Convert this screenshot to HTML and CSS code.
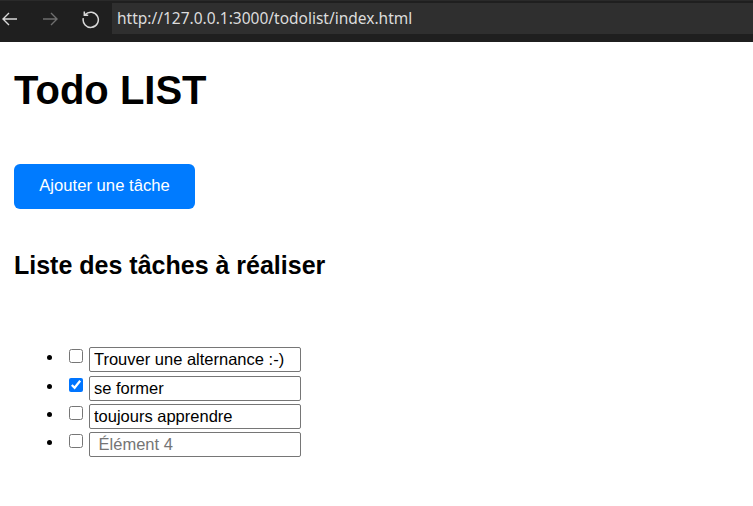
FILE: index.html
```html
<!DOCTYPE html>
<html lang="fr">
<head>
<meta charset="utf-8">
<title>Todo LIST</title>
<link rel="stylesheet" href="styles.css">
</head>
<body>
<header class="chrome">
  <div class="nav">
    <svg class="nav-icon" width="20" height="20" viewBox="0 0 20 20"><path d="M17 10H3M9 4L3 10L9 16" fill="none" stroke="#d8d8d8" stroke-width="1.4"/></svg>
    <svg class="nav-icon" width="20" height="20" viewBox="0 0 20 20"><path d="M3 10H17M11 4L17 10L11 16" fill="none" stroke="#6e6e6e" stroke-width="1.4"/></svg>
    <svg class="nav-icon" width="20" height="20" viewBox="0 0 20 20"><path d="M5.2 5.6A7.6 7.6 0 1 1 3.3 9.2M4.3 2.4V6.2H8.2" fill="none" stroke="#d8d8d8" stroke-width="1.5"/></svg>
  </div>
  <div class="url">http://127.0.0.1:3000/todolist/index.html</div>
</header>
<main class="page">
  <h1 class="title">Todo LIST</h1>
  <button class="add-btn" type="button">Ajouter une tâche</button>
  <h2 class="subtitle">Liste des tâches à réaliser</h2>
  <ul class="tasks">
    <li class="task"><div class="task-row"><input class="check" type="checkbox"><input class="field" type="text" value="Trouver une alternance :-)"></div></li>
    <li class="task"><div class="task-row"><input class="check" type="checkbox" checked><input class="field" type="text" value="se former"></div></li>
    <li class="task"><div class="task-row"><input class="check" type="checkbox"><input class="field" type="text" value="toujours apprendre"></div></li>
    <li class="task"><div class="task-row"><input class="check" type="checkbox"><input class="field" type="text" placeholder=" Élément 4"></div></li>
  </ul>
</main>
</body>
</html>
```

FILE: styles.css
```css
html, body {
  margin: 0;
  padding: 0;
  background: #ffffff;
}

body {
  font-family: "Liberation Sans", Arial, sans-serif;
  color: #000;
}

.chrome {
  height: 42px;
  background: #1f1f1f;
  display: flex;
  align-items: flex-start;
  box-sizing: border-box;
  padding-top: 2px;
  border-top: 1px solid #2a2a2a;
}

.nav {
  display: flex;
  gap: 20px;
  width: 112px;
  padding-left: 0;
  padding-top: 6px;
  box-sizing: border-box;
}

.nav-icon {
  display: block;
}

.url {
  flex: 1;
  height: 31px;
  background: #2f2f2f;
  color: #dcdcdc;
  font-family: "Noto Sans", "Open Sans", sans-serif;
  font-size: 15.5px;
  line-height: 31px;
  padding-left: 5px;
  white-space: nowrap;
  letter-spacing: 0;
}

.page {
  padding: 0 14px;
}

.title {
  margin: 24.7px 0 0;
  font-size: 40px;
  font-weight: bold;
  line-height: 46px;
}

.add-btn {
  display: block;
  margin-top: 51.3px;
  height: 45px;
  width: 181px;
  padding: 0;
  border: none;
  border-radius: 6px;
  background: #007bff;
  color: #fff;
  font-family: "Liberation Sans", Arial, sans-serif;
  font-size: 16.67px;
}

.subtitle {
  margin: 42px 0 0;
  font-size: 25px;
  font-weight: bold;
  line-height: 28.75px;
}

.tasks {
  margin: 65.9px 0 0;
  padding-left: 50px;
  font-size: 16.67px;
}

.task {
  display: list-item;
}

.task-row {
  display: flex;
  align-items: flex-start;
  height: 28.33px;
  padding-top: 1.67px;
  box-sizing: border-box;
}

.check {
  width: 14px;
  height: 14px;
  margin: 2px 5.7px 0 5.3px;
  accent-color: #0075ff;
}

.field {
  width: 212px;
  height: 25px;
  box-sizing: border-box;
  margin: 0;
  padding: 0 4px;
  border: 1px solid #767676;
  border-radius: 2px;
  font-family: "Liberation Sans", Arial, sans-serif;
  font-size: 16.5px;
  color: #000;
}

.field::placeholder {
  color: #757575;
}
```
